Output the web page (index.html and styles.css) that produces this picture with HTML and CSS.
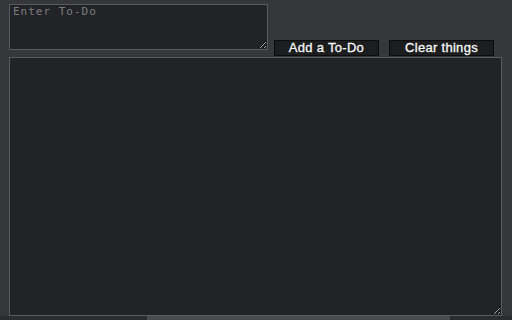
FILE: index.html
```html
<!DOCTYPE html>
<html lang="en">
<head>
    <meta charset="UTF-8">
    <title>To-Do</title>
    <link rel="stylesheet" href="styles.css">
</head>
<body>
    <main class="app">
        <div class="top">
            <textarea class="entry" placeholder="Enter To-Do"></textarea>
            <button class="btn">Add a To-Do</button>
            <button class="btn">Clear things</button>
        </div>
        <textarea class="list"></textarea>
    </main>
    <div class="hbar"><span class="thumb"></span></div>
</body>
</html>
```

FILE: styles.css
```css
* {
    box-sizing: border-box;
}

html,
body {
    margin: 0;
    padding: 0;
    height: 100%;
    background-color: #36373a;
    font-family: "Liberation Sans", Arial, sans-serif;
    overflow: hidden;
}

.app {
    padding: 4px 0 0 9px;
    display: flex;
    flex-direction: column;
    gap: 7px;
}

.top {
    display: flex;
    align-items: flex-start;
    height: 46px;
}

textarea {
    display: block;
    background-color: #222326;
    border: 1px solid #595a5c;
    color: #ccc;
    font-family: "DejaVu Sans Mono", monospace;
    font-size: 11px;
    letter-spacing: 1px;
    line-height: 13px;
    padding: 0 3px;
    margin: 0;
    outline: none;
}

textarea::placeholder {
    color: #7d7e80;
}

.entry {
    width: 259px;
    height: 46px;
    flex: none;
}

.list {
    width: 493px;
    height: 259px;
}

.btn {
    flex: none;
    margin: 36px 0 0 6px;
    width: 105px;
    height: 16px;
    padding: 0;
    background-color: #1c1d1f;
    border: 1px solid #0c0c0d;
    color: #f7f7f7;
    font-family: "Liberation Sans", Arial, sans-serif;
    font-size: 13px;
    letter-spacing: 0.3px;
    line-height: 14px;
    -webkit-text-stroke: 0.3px #f7f7f7;
}

.btn + .btn {
    margin-left: 10px;
}

.hbar {
    position: fixed;
    left: 0;
    right: 0;
    bottom: 0;
    height: 4px;
    background-color: #2b2c2e;
}

.thumb {
    display: block;
    margin-left: 147px;
    width: 303px;
    height: 4px;
    background-color: #4a4b4d;
}
```
